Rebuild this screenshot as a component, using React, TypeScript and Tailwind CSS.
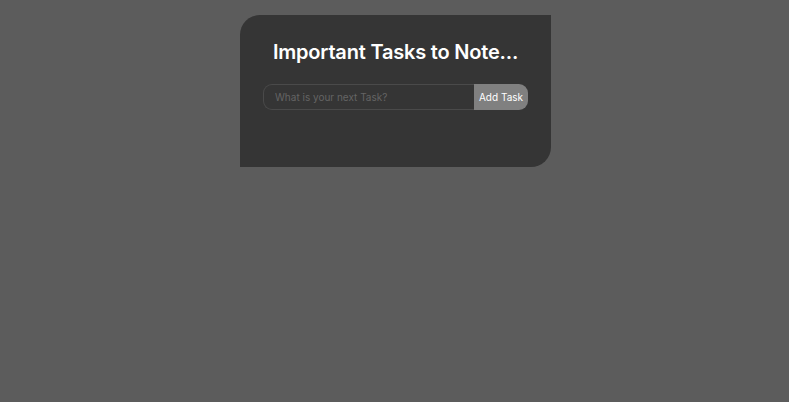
import React from "react";

export default function App() {
  return (
    <div className="min-h-screen w-full bg-[#5c5c5c] flex justify-center" style={{ fontFamily: "Inter, 'Open Sans', sans-serif" }}>
      <div className="mt-[15px] ml-[2px] w-[311px] h-[152px] bg-[#353535] rounded-tl-[20px] rounded-br-[20px] px-[23px] pt-[22px] flex flex-col items-center">
        <h1 className="whitespace-nowrap text-[20px] leading-[30px] font-semibold text-white tracking-[-0.2px]">Important Tasks to Note...</h1>
        <div className="mt-[17px] flex w-full h-[26px]">
          <input
            className="flex-1 min-w-0 h-full bg-transparent border border-[#4a4a4a] border-r-0 rounded-l-[9px] pl-[11px] text-[10px] text-[#ddd] placeholder:text-[#646464] outline-none"
            placeholder="What is your next Task?"
          />
          <button className="w-[54px] h-full bg-[#808080] rounded-r-[9px] text-[10px] text-white">Add Task</button>
        </div>
      </div>
    </div>
  );
}
